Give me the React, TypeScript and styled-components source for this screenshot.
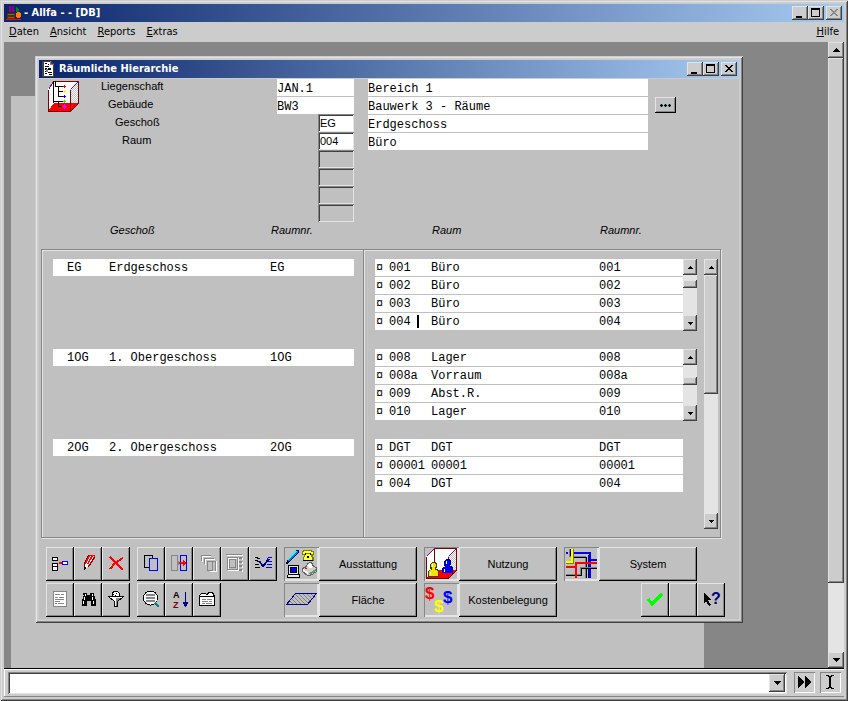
import React from "react";
import styled, { createGlobalStyle, css } from "styled-components";

const face = "#cccccc";
const client = "#c0c0c0";
const shade = "#868686";
const dark = "#404040";
const light = "#e4e4e4";

const raised = css`
  background: ${face};
  box-shadow: inset -1px -1px ${dark}, inset 1px 1px ${light}, inset -2px -2px ${shade};
`;
const sans = `"Liberation Sans", Arial, sans-serif`;
const ui = `"DejaVu Sans Condensed", "DejaVu Sans", sans-serif`;
const mono = `"Liberation Mono", "Courier New", monospace`;

const GlobalStyle = createGlobalStyle`
  *, *::before, *::after { box-sizing: border-box; }
  body { margin: 0; font: 11px/14px ${sans}; color: #000; background: ${face}; }
  button, input { margin: 0; padding: 0; border: 0; border-radius: 0; font: inherit; color: inherit; outline: 0; }
  svg { display: block; flex: none; }
`;

const Shell = styled.div`
  display: flex;
  flex-direction: column;
  height: 100vh;
  padding: 4px;
  background: ${face};
  box-shadow: inset 1px 1px ${face}, inset -1px -1px ${dark}, inset 2px 2px ${light}, inset -2px -2px ${shade};
`;
const TitleBar = styled.header`
  display: flex;
  align-items: center;
  flex: none;
  height: 18px;
  padding: 0 2px;
  gap: 2px;
  background: linear-gradient(90deg, #0a246a, #a6caf0);
  color: #fff;
`;
const TitleText = styled.h1`
  flex: 1;
  margin: 0;
  font: bold 11px/16px ${ui};
  white-space: nowrap;
`;
const WindowButtons = styled.div`
  display: flex;
`;
const WindowButton = styled.button<{ $apart?: boolean; $off?: boolean }>`
  ${raised}
  width: 16px;
  height: 14px;
  margin-left: ${(p) => (p.$apart ? "2px" : "0")};
  color: ${(p) => (p.$off ? shade : "#000")};
`;
const MenuBar = styled.nav`
  display: flex;
  flex: none;
  height: 20px;
  padding: 0 5px;
  gap: 11px;
`;
const MenuItem = styled.button<{ $last?: boolean }>`
  margin-left: ${(p) => (p.$last ? "auto" : "0")};
  background: none;
  font: 11px/20px ${ui};
`;
const Desktop = styled.main`
  display: flex;
  flex: 1;
  min-height: 0;
  border-bottom: 1px solid #000;
`;
const Workspace = styled.div`
  position: relative;
  flex: 1;
  overflow: hidden;
  background: ${shade};
`;
const Backdrop = styled.div`
  position: absolute;
  inset: 54px 124px 0 7px;
  background: ${client};
`;
const Child = styled.section`
  position: absolute;
  top: 14px;
  left: 31px;
  right: 85px;
  min-width: 700px;
  padding: 4px;
  background: ${face};
  box-shadow: inset 1px 1px ${face}, inset -1px -1px ${dark}, inset 2px 2px ${light}, inset -2px -2px ${shade};
`;
const Client = styled.div`
  margin-top: 1px;
  padding-bottom: 2px;
  background: ${client};
`;

const Form = styled.form`
  display: grid;
  grid-template-columns: 322fr 358fr;
  margin: 0 18px 0 2px;
`;
const FormSide = styled.div`
  display: flex;
  padding-right: 9px;
`;
const FormIcon = styled.div`
  width: 60px;
  padding: 2px 0 0 7px;
`;
const Levels = styled.div`
  flex: 1;
`;
const Level = styled.div<{ $depth: number }>`
  display: flex;
  justify-content: space-between;
  height: 18px;
  padding-left: ${(p) => p.$depth * 7}px;
  line-height: 15px;
`;
const Code = styled.input`
  width: 77px;
  height: 17px;
  padding-top: 2px;
  background: #fff;
  font: 12px/15px ${mono};
`;
const Key = styled.input<{ $empty?: boolean }>`
  width: 36px;
  height: 18px;
  margin-top: -1px;
  padding: 0 2px;
  background: ${(p) => (p.$empty ? client : "#fff")};
  box-shadow: inset 1px 1px ${shade}, inset -1px -1px ${light}, inset 2px 2px ${dark};
`;
const Describe = styled.div`
  display: flex;
  align-items: flex-start;
  gap: 7px;
  padding: 0 45px 0 5px;
`;
const Descriptions = styled.div`
  display: flex;
  flex: 1;
  flex-direction: column;
  gap: 1px;
`;
const Description = styled.input`
  width: 100%;
  height: 17px;
  padding-top: 2px;
  background: #fff;
  font: 12px/15px ${mono};
`;
const MoreButton = styled.button`
  display: flex;
  align-items: center;
  justify-content: center;
  width: 21px;
  height: 16px;
  margin-top: 18px;
  background: ${client};
  box-shadow: inset -1px -1px #000, inset 1px 1px ${light}, inset -2px -2px ${shade};
`;

const Headings = styled.div`
  display: grid;
  grid-template-columns: 322fr 358fr;
  margin: 0 18px 0 2px;
  font-style: italic;
`;
const HeadingPair = styled.div<{ $right?: boolean }>`
  display: grid;
  grid-template-columns: minmax(0, 1fr) 84px;
  padding: ${(p) => (p.$right ? "0 37px 0 69px" : "0 8px 0 69px")};
`;

const Panel = styled.div`
  display: grid;
  grid-template-columns: 321fr 357fr;
  margin: 12px 18px 9px 2px;
  border: 1px solid ${shade};
  box-shadow: 1px 1px ${light}, inset 1px 1px ${light};
`;
const Side = styled.div<{ $right?: boolean }>`
  display: flex;
  gap: 7px;
  padding: ${(p) => (p.$right ? "9px 2px 8px 11px" : "9px 9px 8px 11px")};
  border-left: ${(p) => (p.$right ? `1px solid ${shade}` : "0")};
  box-shadow: ${(p) => (p.$right ? `inset 1px 0 ${light}` : "none")};
`;
const Groups = styled.div`
  flex: 1;
`;
const Group = styled.div`
  display: flex;
  align-items: flex-start;
  height: 90px;
`;
const Records = styled.table<{ $gutter?: boolean }>`
  flex: 1;
  width: 100%;
  margin-right: ${(p) => (p.$gutter ? "14px" : "0")};
  border-collapse: separate;
  border-spacing: 0;
  table-layout: fixed;
  font: 12px/15px ${mono};
`;
const Cell = styled.td<{ $w?: number; $pad?: number }>`
  width: ${(p) => (p.$w ? `${p.$w}px` : "auto")};
  height: 18px;
  padding: 2px 0 0 ${(p) => p.$pad ?? 0}px;
  border-bottom: 1px solid ${client};
  background: #fff;
  white-space: nowrap;
`;
const Caret = styled.span`
  display: inline-block;
  width: 2px;
  height: 13px;
  margin-left: 6px;
  background: #000;
  vertical-align: middle;
`;

const Bar = styled.div<{ $wide?: boolean; $tall?: boolean }>`
  display: flex;
  flex: none;
  flex-direction: column;
  align-self: ${(p) => (p.$tall ? "stretch" : "flex-start")};
  width: ${(p) => (p.$wide ? 16 : 14)}px;
  height: ${(p) => (p.$tall ? "auto" : "72px")};
  background: ${light};
`;
const BarButton = styled.button`
  ${raised}
  display: flex;
  flex: none;
  align-items: center;
  justify-content: center;
  width: 100%;
  height: 16px;
`;
const Space = styled.div<{ $grow: number }>`
  flex: ${(p) => p.$grow} 1 0;
`;
const Thumb = styled.div<{ $grow: number }>`
  ${raised}
  flex: ${(p) => p.$grow} 1 0;
`;

const Tools = styled.div`
  display: flex;
  flex-direction: column;
  gap: 2px;
  padding: 0 14px 0 7px;
`;
const ToolRow = styled.div`
  display: flex;
  gap: 7px;
`;
const ToolGroup = styled.div<{ $slots?: number; $end?: boolean }>`
  display: flex;
  width: ${(p) => (p.$slots ? `${p.$slots * 28}px` : "auto")};
  margin-left: ${(p) => (p.$end ? "auto" : "0")};
`;
const Tool = styled.button`
  width: 28px;
  height: 34px;
  background: ${client};
  box-shadow: inset -1px -1px #000, inset 1px 1px ${light}, inset -2px -2px ${shade};
`;
const Action = styled.button`
  display: flex;
  width: 133px;
  height: 34px;
  background: ${client};
`;
const ActionIcon = styled.span`
  width: 35px;
  height: 34px;
  box-shadow: inset 1px 1px ${shade}, inset -2px -2px ${light};
`;
const ActionLabel = styled.span`
  flex: 1;
  line-height: 34px;
  text-align: center;
  box-shadow: inset -1px -1px #000, inset 1px 1px ${light}, inset -2px -2px ${shade};
`;

const CommandBar = styled.footer`
  display: flex;
  flex: none;
  height: 28px;
  padding: 3px 3px 3px 4px;
  border-bottom: 1px solid ${shade};
  box-shadow: inset 1px 1px #fff;
`;
const Combo = styled.div`
  display: flex;
  flex: 1;
  height: 22px;
  padding: 2px;
  background: #fff;
  box-shadow: inset 1px 1px ${shade}, inset -1px -1px ${light}, inset 2px 2px ${dark};
`;
const Command = styled.input`
  flex: 1;
  min-width: 0;
  padding: 0 3px;
  background: #fff;
`;
const ComboButton = styled.button`
  ${raised}
  display: flex;
  align-items: center;
  justify-content: center;
  width: 16px;
  height: 18px;
`;
const StatusButton = styled.button`
  width: 21px;
  height: 21px;
  margin-left: 7px;
  background: ${face};
  box-shadow: inset 1px 1px ${shade}, inset -1px -1px #fff;
  &:last-child { margin-left: 5px; }
`;

function Arrow({ down, small }: { down?: boolean; small?: boolean }) {
  if (small) {
    return (
      <svg width="5" height="3" shapeRendering="crispEdges" aria-hidden="true">
        <path d={down ? "M0 0h5v1h-1v1h-1v1h-1v-1h-1v-1h-1z" : "M2 0h1v1h1v1h1v1h-5v-1h1v-1h1z"} />
      </svg>
    );
  }
  return (
    <svg width="7" height="4" shapeRendering="crispEdges" aria-hidden="true">
      <path d={down ? "M0 0h7v1h-1v1h-1v1h-1v1h-1v-1h-1v-1h-1v-1h-1z" : "M3 0h1v1h1v1h1v1h1v1h-7v-1h1v-1h1v-1h1z"} />
    </svg>
  );
}

function ScrollBar({ wide, tall, before, size, after, name }: {
  wide?: boolean; tall?: boolean; before: number; size: number; after: number; name: string;
}) {
  return (
    <Bar $wide={wide} $tall={tall}>
      <BarButton type="button" aria-label={`${name} aufwärts`}><Arrow small={!wide} /></BarButton>
      <Space $grow={before} />
      <Thumb $grow={size} />
      <Space $grow={after} />
      <BarButton type="button" aria-label={`${name} abwärts`}><Arrow down small={!wide} /></BarButton>
    </Bar>
  );
}

function WindowControls({ closeOff }: { closeOff?: boolean }) {
  return (
    <WindowButtons>
      <WindowButton aria-label="Minimieren">
        <svg width="16" height="14" shapeRendering="crispEdges"><path d="M4 10h6v2h-6z" /></svg>
      </WindowButton>
      <WindowButton aria-label="Maximieren">
        <svg width="16" height="14" shapeRendering="crispEdges"><path fillRule="evenodd" d="M3 2h9v9h-9zM4 4v6h7v-6z" /></svg>
      </WindowButton>
      <WindowButton $apart $off={closeOff} disabled={closeOff} aria-label="Schließen">
        <svg width="16" height="14" shapeRendering="crispEdges" fill="currentColor">
          <path d="M4 3h2v1h1v1h2v-1h1v-1h2v1h-1v1h-1v1h-1v1h1v1h1v1h1v1h-2v-1h-1v-1h-2v1h-1v1h-2v-1h1v-1h1v-1h1v-1h-1v-1h-1v-1h-1z" />
        </svg>
      </WindowButton>
    </WindowButtons>
  );
}

function AppIcon() {
  return (
    <svg width="16" height="16" shapeRendering="crispEdges" aria-hidden="true">
      <path fill="#900090" d="M3 1h2v6h-2zM6 1h2v6h-2z" />
      <path fill="#400040" d="M5 1h1v6h-1z" />
      <path fill="#008020" d="M10 2h1v1h1v1h1v2h-1v1h-2z" />
      <path fill="#503010" d="M1 8h8v6h-8z" />
      <path fill="#906020" d="M2 9h6v1h-6zM2 12h6v1h-6z" />
      <path fill="#ff8000" d="M11 7h3v1h1v4h-1v1h-3v-1h-1v-4h1z" />
      <path fill="#ff0000" d="M0 14h15v1h-15z" />
    </svg>
  );
}
function DocumentIcon() {
  return (
    <svg width="16" height="16" shapeRendering="crispEdges" aria-hidden="true">
      <path fill="#404040" d="M1 0h9l3 3v13h-12z" />
      <path fill="#fff" d="M3 1h6v3h3v11h-9z" />
      <path d="M4 2h2v1h-2zM7 3h1v1h-1zM4 5h4v1h-4zM4 7h2v2h-2zM7 7h3v2h-3zM4 10h2v1h-2zM4 12h2v1h-2zM7 11h4v1h-4zM8 13h3v1h-3z" />
      <path fill="#808080" d="M9 0h1v3h3v1h-4zM5 8h2v3h-2z" />
    </svg>
  );
}

function Room({ people }: { people?: boolean }) {
  return (
    <>
      <defs>
        <pattern id={people ? "wallA" : "wallB"} width="2" height="2" patternUnits="userSpaceOnUse">
          <path fill="#fff" d="M0 0h2v2h-2z" />
          <path fill="#c0c0c0" d="M0 0h1v1h-1zM1 1h1v1h-1z" />
        </pattern>
      </defs>
      <path fill="#fff" d={people ? "M0 8L8 0H31V22L22 30H0Z" : "M0 8L6 0H31V22L22 30H0Z"} />
      <path fill={people ? "url(#wallA)" : "url(#wallB)"} d="M22 8L30 1V22L22 30Z" />
      <path fill="#f00" d={people ? "M0 30L8 22H30L22 30Z" : "M0 30L6 22H30L22 30Z"} />
      <path stroke="#800000" fill="none" d={people ? "M8.5 22V.5H30.5V22.5L22.5 30.5H.5V8.5M22.5 8.5V30" : "M5.5 22V.5H30.5V22.5L22.5 30.5H.5V8.5M22.5 8.5V30"} />
      <path stroke="#800080" fill="none" d={people ? "M.5 8.5L8.5 .5M22.5 8.5L30.5 .5" : "M.5 8.5L5.5 .5M22.5 8.5L30.5 .5"} />
    </>
  );
}
function HierarchyIcon() {
  return (
    <svg width="32" height="32" shapeRendering="crispEdges" aria-hidden="true">
      <Room />
      <path fill="none" stroke="#000" d="M5.5 0V20.5H10.5V25.5H15M7.5 0V5.5H15M10.5 5V15.5H15M10.5 10.5H15M10.5 20.5H15" />
      <path fill="#f00" d="M15 5h3v1h-3zM16 4h1v3h-1z" />
      <path fill="#ff0" d="M15 10h3v1h-3zM16 9h1v3h-1z" />
      <path fill="#00f" d="M15 15h3v1h-3zM16 14h1v3h-1z" />
      <path fill="#0f0" d="M15 20h3v1h-3zM16 19h1v3h-1z" />
      <path fill="#f0f" d="M14 25h5v1h-5zM15 24h3v3h-3zM16 23h1v5h-1z" />
    </svg>
  );
}

/* Drawings inside the 28 by 34 tool buttons */
const toolArt: Record<string, React.ReactNode> = {
  insert: (
    <>
      <path fill="#fff" stroke="#000" d="M6.5 10.5h5v3h-5zM6.5 16.5h5v3h-5zM6.5 19.5h5v4h-5z" />
      <path fill="#fff" stroke="#00f" d="M16.5 14.5h5v3h-5z" />
      <path fill="#f00" d="M12 16l2-2v1h2v2h-2v1z" />
    </>
  ),
  edit: (
    <>
      <path fill="#f00" d="M14 8H21V11L15 20L10 17Z" />
      <path fill="none" stroke="#800000" d="M14.5 8L10.5 16V20" />
      <path fill="none" stroke="#fff" d="M16.5 9L12.5 17M19.5 9L14.5 18" />
      <path fill="#fff" d="M11 17h3v2l-2 2h-1z" />
      <path fill="none" stroke="#800000" d="M20.5 10L14.5 20" />
      <path d="M10 20h2v1l-2 3z" />
    </>
  ),
  remove: <path stroke="#f00" strokeWidth="2" fill="none" d="M8 10l5 5 8 8M21 11l-8 5-5 6" />,
  copy: (
    <>
      <path fill="none" stroke="#000" d="M7.5 8.5h8v12h-8z" />
      <path fill={client} stroke="#00f" d="M12.5 11.5h8v12h-8z" />
    </>
  ),
  move: (
    <>
      <path fill="none" stroke={shade} d="M6.5 8.5h6v15h-6z" />
      <path fill="none" stroke="#00f" d="M15.5 8.5h6v15h-6z" />
      <path fill={shade} d="M12 14h2v4h-2z" />
      <path fill="#f00" d="M14 15h4v-2l3 3-3 3v-2h-4z" />
    </>
  ),
  stack: (
    <>
      <path fill="none" stroke="#fff" d="M9.5 15V9.5H18M12.5 18V12.5H22M16.5 24.5h7v-11" />
      <path fill="none" stroke={shade} d="M8.5 14V8.5H18M11.5 17V11.5H21M14.5 14.5h5v9h-5zM19.5 14.5h3v9" />
    </>
  ),
  notebook: (
    <>
      <path fill="none" stroke="#fff" d="M7.5 11.5h10v12h-10zM6 8.5h16" />
      <path fill="none" stroke={shade} d="M6.5 10.5h10v12h-10zM5 7.5h16M8.5 12.5h6v8h-6z" />
      <path fill="none" stroke={shade} strokeWidth="3" strokeDasharray="2 2" d="M19.5 10v14" />
      <path fill="none" stroke="#fff" strokeWidth="1" strokeDasharray="2 2" d="M21.5 11v14" />
    </>
  ),
  assign: (
    <>
      <path d="M6 10h3v1h2v1h-3v-1h-2zM6 13h3v1h2v1h-3v-1h-2zM6 17h4v1h-4zM6 20h5v1h-5z" />
      <path fill="#00f" d="M18 11h1v-1h4v1h-4v1h-1zM19 14h4v1h-4zM18 17h5v1h-5zM17 20h6v1h-6z" />
      <path fill="none" stroke="#000080" strokeWidth="2" d="M10 14l4 5 6-7" />
    </>
  ),
  page: (
    <>
      <path fill="#fff" stroke={shade} d="M7.5 8.5h13v15h-13z" />
      <path fill={shade} d="M9 11h5v1h-5zM15 11h3v1h-3zM9 14h3v1h-3zM13 14h5v1h-5zM9 16h9v1h-9zM9 18h5v1h-5zM9 20h2v1h-2zM12 20h6v1h-6z" />
    </>
  ),
  search: (
    <>
      <path d="M9 10h4v2h3v-2h4v3h1v3h1v7h-5v-5h-4v5h-5v-7h1v-3h1z" />
      <path fill="#fff" d="M11 11h1v2h-1zM10 14h1v3h-1zM18 11h1v2h-1zM18 14h1v3h-1zM9 18h1v3h-1zM19 18h1v3h-1z" />
    </>
  ),
  filter: (
    <>
      <path fill="#fff" stroke="#000" d="M10.5 13.5v-4l2-1h3l2 2v3" />
      <path fill="#fff" stroke="#000" d="M6.5 13.5h15l-6 5v5h-3v-5z" />
      <path fill={shade} d="M14 15h5l-4 3v5h-1z" />
      <path d="M11 11h1v1h-1zM14 10h1v1h-1zM13 12h1v1h-1z" />
    </>
  ),
  zoom: (
    <>
      <circle cx="13.5" cy="15" r="7" fill="#fff" stroke="#000" />
      <path fill={shade} d="M9 11h9v2h-9zM9 14h9v2h-9zM9 17h9v2h-9z" />
      <path stroke="#008080" strokeWidth="2" d="M18 20l4 4" />
    </>
  ),
  sort: (
    <>
      <text x="8" y="15" fontSize="9" fontWeight="bold">A</text>
      <text x="8" y="25" fontSize="9" fontWeight="bold" fill="#800000">Z</text>
      <path fill="#000080" d="M20 9h1v10h2v1l-1 2-1 2h-1l-1-2-1-2v-1h2z" />
    </>
  ),
  cards: (
    <>
      <path fill="#fff" stroke="#000" d="M6.5 12.5l2-2h4l1 1h1l1-2h4l1 2v1h1v10h-15z" />
      <path d="M7 13h14v1h-14z" />
      <path fill={shade} d="M9 16h4v1h-4zM14 16h5v1h-5zM9 18h6v1h-6zM16 18h3v1h-3zM9 20h3v1h-3zM13 20h6v1h-6z" />
    </>
  ),
  accept: <path fill="none" stroke="#0f0" strokeWidth="3" d="M7 16l4 5 10-10" />,
  blank: null,
  help: (
    <>
      <path d="M7 9l7 8h-3l3 5-2 1-3-5-2 2z" />
      <text x="14" y="21" fontSize="16" fontWeight="bold" fill="#000080">?</text>
    </>
  ),
};

function ToolButton({ art, label }: { art: string; label: string }) {
  return (
    <Tool type="button" aria-label={label}>
      <svg width="28" height="34" shapeRendering="crispEdges" aria-hidden="true">{toolArt[art]}</svg>
    </Tool>
  );
}

function Person({ x, y, fill, edge }: { x: number; y: number; fill: string; edge: string }) {
  return (
    <g transform={`translate(${x} ${y})`}>
      <path fill={edge} d="M4 0h4v1h1v5h-1v1h2v1h1v7h-11v-6l1-1h2v-1h-1v-5h1z" />
      <path fill={fill} d="M4 1h3v1h1v3h-1v3h2v1h1v5h-9v-5h1v-1h2v-3h-1v-3h1z" />
      <path fill="#fff" d="M4 2h1v3h-1zM2 10h1v3h-1z" />
    </g>
  );
}

/* Drawings beside the labelled actions, 34 by 34 */
const actionArt: Record<string, React.ReactNode> = {
  equipment: (
    <>
      <path fill="#000080" d="M12 3h3v2l-9 10-3 2v-3z" />
      <path fill="#0080c0" d="M12 4h2v1l-8 9h-2z" />
      <path fill="#00ffff" d="M11 4h2l-8 9h-1z" />
      <path d="M3 14l2 2-3 1z" />
      <path fill="#808000" d="M19 3h9v1h2v4h-1v2h1v4h-11v-4h1v-2h-2v-4h1z" />
      <path fill="#ffff40" d="M20 4h7v1h2v2h-2v-1h-6v1h-2v-2h1zM21 7h6v3h1v3h-8v-3h1z" />
      <path d="M21 6h1v2h-1zM26 6h1v2h-1zM23 9h2v2h-2zM19 13h10v1h-10z" />
      <path d="M4 18h11v9h1v4h-13v-3h1z" />
      <path fill="#e8e8e8" d="M5 19h9v8h-9zM4 28h11v2h-11z" />
      <path d="M6 20h7v6h-7z" />
      <path fill="#00f" d="M7 21h5v4h-5z" />
      <path stroke="#606060" fill="#d0d0d0" d="M18.5 21.5l4-2 1-3 4-1 2 4 3 1v4l-6 4h-3l-5-4z" />
      <path fill="#fff" d="M23 19l2-3h2l2 4-3 1zM19 22l5 3v2l-5-3z" />
      <path fill="#808080" d="M25 26l7-4v2l-6 4z" />
      <path fill="#0f0" d="M28 24h2v1h-2z" />
      <path fill="#f00" d="M21 21h2v1h-2z" />
    </>
  ),
  usage: (
    <g transform="translate(2 1)">
      <Room people />
      <Person x={16} y={11} fill="#0000ff" edge="#000080" />
      <Person x={2} y={14} fill="#e8e800" edge="#404000" />
      <path fill="#f00" d="M13 25h13l-4 5h-21v-1h12z" />
    </g>
  ),
  system: (
    <>
      <path fill="none" stroke="#808080" d="M5.5 2V9.5H21.5V31" />
      <path fill="none" stroke="#000" d="M6.5 2V8.5M10 10.5H22.5V31" />
      <path fill="none" stroke="#0000ff" strokeWidth="2" d="M2 6H4M10 6H26V31M26 13H33" />
      <path fill="none" stroke="#000080" d="M24.5 8V31" />
      <path fill="none" stroke="#000" d="M2 28.5H17.5V21.5H33" />
      <path fill="none" stroke="#808080" d="M2 27.5H16.5V20.5H33" />
      <path fill="none" stroke="#ff0000" strokeWidth="2" d="M2 20H12M12 31V16H33" />
      <path fill="none" stroke="#808000" d="M2 16.5H9.5V2" />
      <path fill="none" stroke="#ffff00" strokeWidth="2" d="M2 15H8V2" />
    </>
  ),
  area: (
    <>
      <defs>
        <pattern id="hatch" width="4" height="4" patternUnits="userSpaceOnUse">
          <path fill="#808080" d="M0 0h1v1h-1zM1 1h1v1h-1zM2 2h1v1h-1zM3 3h1v1h-1z" />
        </pattern>
      </defs>
      <path fill="url(#hatch)" stroke="#000080" d="M2.5 21.5L11.5 10.5H32.5L23.5 21.5Z" />
    </>
  ),
  costs: (
    <>
      <text x="1" y="16" fontSize="17" fontWeight="bold" fill="#ff0000">$</text>
      <text x="19" y="20" fontSize="17" fontWeight="bold" fill="#0000ff">$</text>
      <text x="10" y="29" fontSize="17" fontWeight="bold" fill="#ffff00">$</text>
    </>
  ),
};

function ActionButton({ art, label }: { art: string; label: string }) {
  return (
    <Action type="button">
      <ActionIcon>
        <svg width="33" height="34" shapeRendering="crispEdges" aria-hidden="true">{actionArt[art]}</svg>
      </ActionIcon>
      <ActionLabel>{label}</ActionLabel>
    </Action>
  );
}

const levels = [
  { id: "liegenschaft", label: "Liegenschaft", code: "JAN.1", text: "Bereich 1" },
  { id: "gebaeude", label: "Gebäude", code: "BW3", text: "Bauwerk 3 - Räume" },
  { id: "geschoss", label: "Geschoß", key: "EG", text: "Erdgeschoss" },
  { id: "raum", label: "Raum", key: "004", text: "Büro" },
];
const floors = [
  ["EG", "Erdgeschoss", "EG"],
  ["1OG", "1. Obergeschoss", "1OG"],
  ["2OG", "2. Obergeschoss", "2OG"],
];
const rooms = [
  { bar: [5, 8, 27], rows: [["001", "Büro", "001"], ["002", "Büro", "002"], ["003", "Büro", "003"], ["004", "Büro", "004"]] },
  { bar: [12, 8, 20], rows: [["008", "Lager", "008"], ["008a", "Vorraum", "008a"], ["009", "Abst.R.", "009"], ["010", "Lager", "010"]] },
  { bar: null, rows: [["DGT", "DGT", "DGT"], ["00001", "00001", "00001"], ["004", "DGT", "004"]] },
];

export default function App() {
  return (
    <Shell>
      <GlobalStyle />
      <TitleBar>
        <AppIcon />
        <TitleText>- Allfa - - [DB]</TitleText>
        <WindowControls closeOff />
      </TitleBar>
      <MenuBar>
        <MenuItem><u>D</u>aten</MenuItem>
        <MenuItem><u>A</u>nsicht</MenuItem>
        <MenuItem><u>R</u>eports</MenuItem>
        <MenuItem><u>E</u>xtras</MenuItem>
        <MenuItem $last><u>H</u>ilfe</MenuItem>
      </MenuBar>
      <Desktop>
        <Workspace>
          <Backdrop />
          <Child>
            <TitleBar>
              <DocumentIcon />
              <TitleText as="h2">Räumliche Hierarchie</TitleText>
              <WindowControls />
            </TitleBar>
            <Client>
              <Form onSubmit={(e) => e.preventDefault()}>
                <FormSide>
                  <FormIcon><HierarchyIcon /></FormIcon>
                  <Levels>
                    {levels.map((l, i) => (
                      <Level key={l.id} $depth={i}>
                        <label htmlFor={l.id}>{l.label}</label>
                        {l.code ? <Code id={l.id} defaultValue={l.code} /> : <Key id={l.id} defaultValue={l.key} />}
                      </Level>
                    ))}
                    {[5, 6, 7, 8].map((n) => (
                      <Level key={n} $depth={4}><span /><Key $empty aria-label={`Ebene ${n}`} /></Level>
                    ))}
                  </Levels>
                </FormSide>
                <Describe>
                  <Descriptions>
                    {levels.map((l) => (
                      <Description key={l.id} aria-label={`${l.label} Bezeichnung`} defaultValue={l.text} />
                    ))}
                  </Descriptions>
                  <MoreButton type="button" aria-label="Auswahl">
                    <svg width="11" height="3" shapeRendering="crispEdges">
                      <path fill="#60a8a8" d="M0 0h3v3h-3zM4 0h3v3h-3zM8 0h3v3h-3z" />
                      <path d="M0 1h3v1h-3zM1 0h1v3h-1zM4 1h3v1h-3zM5 0h1v3h-1zM8 1h3v1h-3zM9 0h1v3h-1z" />
                    </svg>
                  </MoreButton>
                </Describe>
              </Form>
              <Headings>
                <HeadingPair><span>Geschoß</span><span>Raumnr.</span></HeadingPair>
                <HeadingPair $right><span>Raum</span><span>Raumnr.</span></HeadingPair>
              </Headings>
              <Panel>
                <Side>
                  <Groups>
                    {floors.map(([code, name, nr]) => (
                      <Group key={code}>
                        <Records aria-label={name}>
                          <tbody>
                            <tr><Cell $w={56} $pad={14}>{code}</Cell><Cell>{name}</Cell><Cell $w={84}>{nr}</Cell></tr>
                          </tbody>
                        </Records>
                      </Group>
                    ))}
                  </Groups>
                </Side>
                <Side $right>
                  <Groups>
                    {rooms.map((g, i) => (
                      <Group key={i}>
                        <Records $gutter={!g.bar} aria-label={`Räume ${floors[i][1]}`}>
                          <tbody>
                            {g.rows.map(([code, name, nr]) => (
                              <tr key={code}>
                                <Cell $w={14} $pad={1}>¤</Cell>
                                <Cell $w={42}>{code}{i === 0 && code === "004" && <Caret />}</Cell>
                                <Cell>{name}</Cell>
                                <Cell $w={84}>{nr}</Cell>
                              </tr>
                            ))}
                          </tbody>
                        </Records>
                        {g.bar && <ScrollBar name="Räume" before={g.bar[0]} size={g.bar[1]} after={g.bar[2]} />}
                      </Group>
                    ))}
                  </Groups>
                  <ScrollBar tall name="Geschosse" before={0} size={119} after={119} />
                </Side>
              </Panel>
              <Tools>
                <ToolRow>
                  <ToolGroup $slots={3}>
                    <ToolButton art="insert" label="Einfügen" />
                    <ToolButton art="edit" label="Bearbeiten" />
                    <ToolButton art="remove" label="Löschen" />
                  </ToolGroup>
                  <ToolGroup $slots={5}>
                    <ToolButton art="copy" label="Kopieren" />
                    <ToolButton art="move" label="Verschieben" />
                    <ToolButton art="stack" label="Stapel" />
                    <ToolButton art="notebook" label="Notizbuch" />
                    <ToolButton art="assign" label="Zuordnen" />
                  </ToolGroup>
                  <ActionButton art="equipment" label="Ausstattung" />
                  <ActionButton art="usage" label="Nutzung" />
                  <ActionButton art="system" label="System" />
                </ToolRow>
                <ToolRow>
                  <ToolGroup $slots={3}>
                    <ToolButton art="page" label="Bericht" />
                    <ToolButton art="search" label="Suchen" />
                    <ToolButton art="filter" label="Filter" />
                  </ToolGroup>
                  <ToolGroup $slots={5}>
                    <ToolButton art="zoom" label="Details" />
                    <ToolButton art="sort" label="Sortieren" />
                    <ToolButton art="cards" label="Kartei" />
                  </ToolGroup>
                  <ActionButton art="area" label="Fläche" />
                  <ActionButton art="costs" label="Kostenbelegung" />
                  <ToolGroup $end>
                    <ToolButton art="accept" label="Übernehmen" />
                    <ToolButton art="blank" label="Leer" />
                    <ToolButton art="help" label="Hilfe" />
                  </ToolGroup>
                </ToolRow>
              </Tools>
            </Client>
          </Child>
        </Workspace>
        <ScrollBar wide tall name="Arbeitsbereich" before={0} size={525} after={69} />
      </Desktop>
      <CommandBar>
        <Combo>
          <Command aria-label="Befehl" />
          <ComboButton aria-label="Befehlsliste"><Arrow down /></ComboButton>
        </Combo>
        <StatusButton aria-label="Ausführen">
          <svg width="21" height="21" shapeRendering="crispEdges"><path d="M4 4l6 6-6 6zM11 4l6 6-6 6z" /></svg>
        </StatusButton>
        <StatusButton aria-label="Einfügemodus">
          <svg width="21" height="21" shapeRendering="crispEdges">
            <path d="M6 3h3v1h2v-1h3v1h-2v1h-1v10h1v1h2v1h-3v-1h-2v1h-3v-1h2v-1h1v-10h-1v-1h-2z" />
          </svg>
        </StatusButton>
      </CommandBar>
    </Shell>
  );
}
